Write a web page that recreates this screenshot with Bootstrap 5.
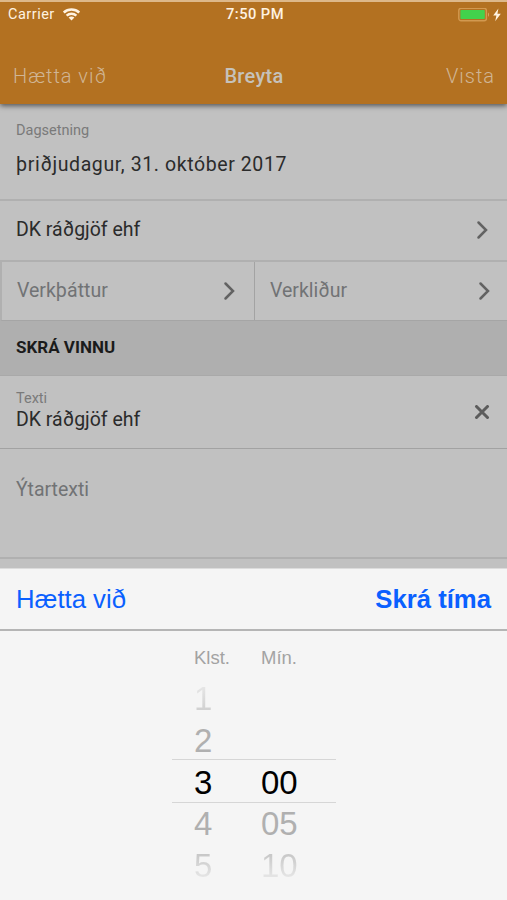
<!DOCTYPE html>
<html lang="is">
<head>
<meta charset="utf-8">
<meta name="viewport" content="width=device-width, initial-scale=1">
<title>Breyta</title>
<link href="https://cdn.jsdelivr.net/npm/bootstrap@5.3.0/dist/css/bootstrap.min.css" rel="stylesheet">
<style>
body{font-family:Roboto,sans-serif;background:#c1c1c1;height:900px;overflow:hidden;color:#2b2b2b;font-size:19.5px;line-height:24px}
.app-head{height:104px;background:#b37121;border-top:2px solid #ddb88a;box-shadow:0 2px 5px rgba(0,0,0,.55);z-index:1}
.status{height:25px;padding:0 5px 0 8px;color:#fff3e2;font-size:14.5px;line-height:25px}
.status>div{flex:1 1 0}
.status .carrier{letter-spacing:.5px}
.status .clock{font-weight:500;font-size:14.7px;letter-spacing:.45px}
.titles{height:77px;padding:20px 12px 0 13px;color:#d0b594;font-size:20px;font-weight:300;letter-spacing:.97px}
.titles>div{flex:1 1 0}
.titles .title{font-weight:500;color:#c6c2bb;letter-spacing:.3px}
.line{border-bottom:2px solid #b0b0b0;padding:0 16px}
.muted{color:#717375}
.cap{font-size:14.5px;line-height:18px;color:#7a7a7a}
.r-date{height:97px;padding-top:18px}
.r-date .val{letter-spacing:.6px;margin-top:13px}
.r-client{height:61px;padding-bottom:1px}
.pair{height:59px;border-left:2px solid #b0b0b0;border-bottom:1px solid #a5a5a5}
.pair>div{padding:0 16px 0 15px}
.pair>div:last-child{border-left:1px solid #a3a3a3;padding-right:14px}
.pair>div:first-child{flex:0 0 252px}
.sect{height:55px;background:#afafaf;border-bottom:1px solid #a9a9a9;padding:0 16px 2px;font-size:17px;font-weight:700;color:#1b1b1b}
.r-text{height:73px;border-bottom:1px solid #a2a2a2;padding:14px 16px 0}
.r-more{height:110px;padding-top:29px}
.sheet{height:332px;background:#f5f5f5;border-top:1px solid #dcdcdc;font-family:"Liberation Sans",Arial,sans-serif}
.tools{height:62px;border-bottom:2px solid #b5b5b5;padding:0 16px;font-size:25.7px;color:#0a60ff}
.wheel{width:164px;margin-left:172px;color:#000;font-size:33px;line-height:41px}
.w-row{height:41.5px}
.w-row>span:first-child{width:67px;margin-left:22px}
.w-row.w-cap{font-size:18.5px;line-height:24px;color:#a3a3a3;height:47px;padding-top:15px}
.w-near{color:#b0b0b0}
.w-row.w-now{height:44px;margin:-2px 0 0;border-top:1px solid #d6d6d6;border-bottom:1px solid #d6d6d6;padding-top:2px}
.fade-up{background:linear-gradient(#e6e6e6 20%,#cfcfcf 80%);-webkit-background-clip:text;background-clip:text;color:transparent}
.fade-down{background:linear-gradient(#c6c6c6 20%,#e6e6e6 80%);-webkit-background-clip:text;background-clip:text;color:transparent}
svg{display:block;flex:none}
.chev{fill:none;stroke:#626262;stroke-width:2.5;stroke-linecap:round}
.clear{margin-top:15px}
</style>
<script src="https://cdn.jsdelivr.net/npm/bootstrap@5.3.0/dist/js/bootstrap.bundle.min.js"></script>
</head>
<body class="d-flex flex-column">
<header class="app-head position-relative flex-shrink-0">
  <div class="status d-flex align-items-center">
    <div class="carrier d-flex align-items-center"><span class="me-2">Carrier</span>
      <svg width="17" height="13" viewBox="0 0 17 13" fill="none" stroke="#fff3e2" stroke-width="2.5"><path d="M.8 4.5C5 .6 12 .6 16.2 4.5M3.6 7.6c2.8-2.5 7-2.5 9.8 0"/><path d="M8.5 12.6 5.6 9.6c1.7-1.4 4.1-1.4 5.8 0z" fill="#fff3e2" stroke="none"/></svg>
    </div>
    <div class="clock text-center flex-grow-0 text-nowrap">7:50 PM</div>
    <div class="d-flex justify-content-end">
      <svg width="44" height="14" viewBox="0 0 44 14"><rect x=".8" y=".3" width="27.6" height="12.4" rx="2.2" fill="none" stroke="#d29950" stroke-width="1.4"/><rect x="2.4" y="2" width="24.4" height="9" rx=".8" fill="#42d24c"/><path d="M30 4.6v4.2c1.3-.5 1.3-3.7 0-4.2z" fill="#d9a869"/><path d="M40.4.6 35.2 7.6h3.2l-1.2 5.6 5.6-7.4h-3.4z" fill="#fff3e2"/></svg>
    </div>
  </div>
  <div class="titles d-flex align-items-center">
    <div>Hætta við</div>
    <div class="title text-center">Breyta</div>
    <div class="text-end">Vista</div>
  </div>
</header>
<main class="flex-grow-1">
  <div class="line r-date">
    <div class="cap">Dagsetning</div>
    <div class="val">þriðjudagur, 31. október 2017</div>
  </div>
  <div class="line r-client d-flex justify-content-between align-items-center">
    <span>DK ráðgjöf ehf</span>
    <svg class="chev" width="18" height="20" viewBox="0 0 18 20"><path d="M5.5 2.5l7.5 7.5-7.5 7.5"/></svg>
  </div>
  <div class="pair d-flex muted">
    <div class="d-flex justify-content-between align-items-center"><span>Verkþáttur</span><svg class="chev" width="18" height="20" viewBox="0 0 18 20"><path d="M5.5 2.5l7.5 7.5-7.5 7.5"/></svg></div>
    <div class="flex-grow-1 d-flex justify-content-between align-items-center"><span>Verkliður</span><svg class="chev" width="18" height="20" viewBox="0 0 18 20"><path d="M5.5 2.5l7.5 7.5-7.5 7.5"/></svg></div>
  </div>
  <div class="sect d-flex align-items-center">SKRÁ VINNU</div>
  <div class="r-text d-flex justify-content-between">
    <div><div class="cap">Texti</div><div>DK ráðgjöf ehf</div></div>
    <svg class="clear" width="18" height="18" viewBox="0 0 18 18" fill="none" stroke="#5c5c5c" stroke-width="3" stroke-linecap="round"><path d="M3.5 1.5l11 11M14.5 1.5l-11 11"/></svg>
  </div>
  <div class="line r-more muted">Ýtartexti</div>
</main>
<section class="sheet flex-shrink-0">
  <div class="tools d-flex justify-content-between align-items-center">
    <span>Hætta við</span><span class="fw-bold">Skrá tíma</span>
  </div>
  <div class="wheel">
    <div class="w-row w-cap d-flex"><span>Klst.</span><span>Mín.</span></div>
    <div class="w-row fade-up d-flex"><span>1</span></div>
    <div class="w-row w-near d-flex"><span>2</span></div>
    <div class="w-row w-now d-flex"><span>3</span><span>00</span></div>
    <div class="w-row w-near d-flex"><span>4</span><span>05</span></div>
    <div class="w-row fade-down d-flex"><span>5</span><span>10</span></div>
  </div>
</section>
</body>
</html>
